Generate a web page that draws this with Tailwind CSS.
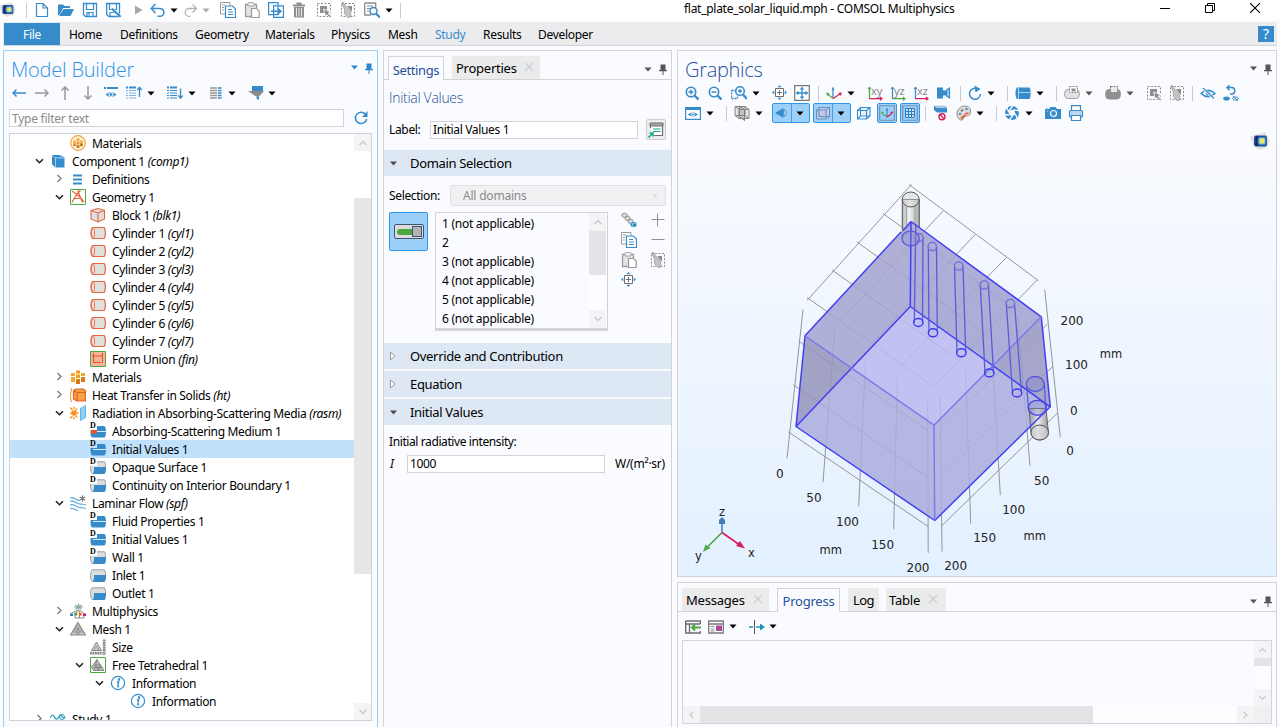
<!DOCTYPE html>
<html lang="en">
<head>
<meta charset="utf-8">
<title>flat_plate_solar_liquid.mph - COMSOL Multiphysics</title>
<script src="https://cdn.jsdelivr.net/npm/@tailwindcss/browser@4"></script>
</head>
<body class="w-[1280px] h-[727px] overflow-hidden bg-[#fafbff] font-['Noto_Sans','Open_Sans',sans-serif] text-[12px] leading-[18px] tracking-[-0.34px] text-black flex flex-col">

<!-- icon library -->
<svg class="hidden" xmlns="http://www.w3.org/2000/svg">
  <symbol id="logo" viewBox="0 0 20 18"><path d="M0 4.500 15 0l5 9-3 7-8 2-6-5z" fill="#e3e3e6"/><rect x="4" y="3.500" width="13" height="11" rx="2" fill="#2a4f96"/><rect x="5.500" y="4.500" width="4" height="9" fill="#14206b"/><rect x="7.500" y="5" width="8.500" height="8" rx="2" fill="#2e8fd6"/><rect x="9" y="6" width="6" height="6" rx="1.500" fill="#8fd0a8"/><rect x="9.800" y="6.800" width="4.400" height="4.400" rx="1" fill="#f3e65c"/></symbol>
  <symbol id="dd" viewBox="0 0 8 5"><path d="M.5.500h7L4 4.500z" fill="currentColor"/></symbol>
  <symbol id="pin" viewBox="0 0 8 11"><path d="M1.500.500h5v5.500H8v1.200H0V6h1.500zM3.500 7h1v4h-1z" fill="currentColor"/></symbol>
  <symbol id="new" viewBox="0 0 16 16"><path d="M2.500 1.500h6.500l4.500 4.500v8.500h-11zM9 1.500v4.500h4.500" fill="#fff" stroke="#368bcb" stroke-width="1.200"/></symbol>
  <symbol id="open" viewBox="0 0 16 16"><path d="M0 2.500h5l1.500 1.500H12v2H5L2 12l-2 1.500z" fill="#368bcb"/><path d="M5.500 7H16l-3.500 7H1z" fill="#368bcb"/></symbol>
  <symbol id="save" viewBox="0 0 16 16"><path d="M1.500 1.500h13v13h-11l-2-2z" fill="none" stroke="#368bcb" stroke-width="1.300"/><path d="M4.500 1.500v6h7v-6M5 14.500v-4h6v4M7 11v2.500" fill="none" stroke="#368bcb" stroke-width="1.200"/></symbol>
  <symbol id="saveas" viewBox="0 0 16 16"><path d="M.7 1.500h12.800v13H2.700l-2-2z" fill="none" stroke="#368bcb" stroke-width="1.300"/><path d="M3.500 1.500v6h7v-6M4 14.500v-4h5" fill="none" stroke="#368bcb" stroke-width="1.200"/><path d="m5 5.500 2 .5 8.500 8-1.500 2-8.500-8z" fill="#368bcb" stroke="#fff" stroke-width=".5"/></symbol>
  <symbol id="play" viewBox="0 0 16 16"><path d="M5 3.500 12.500 8 5 12.500z" fill="#a6a6a6"/></symbol>
  <symbol id="undo" viewBox="0 0 16 16"><path d="M1.500 6.500H10a3.800 3.800 0 0 1 0 7.800H7.500M5.500 2l-4.300 4.500 4.300 4.500" fill="none" stroke="currentColor" stroke-width="1.500"/></symbol>
  <symbol id="redo" viewBox="0 0 16 16"><path d="M13 6.500H6a3.800 3.800 0 0 0 0 7.800h1.500M9.500 2.500l4 4-4 4" fill="none" stroke="#b4b4b4" stroke-width="1.300"/></symbol>
  <symbol id="copy" viewBox="0 0 16 16"><path d="M.5.500h9.500v11.500H.5z" fill="#fff" stroke="#9b9b9b"/><path d="M2 3h3M2 5.500h2M2 8h2" stroke="#9b9b9b"/><path d="M5.500 4h7l3 3v8.500h-10z" fill="#fff" stroke="#368bcb" stroke-width="1.200"/><path d="M8 7.500h4M8 10h5M8 12.500h5" stroke="#368bcb"/></symbol>
  <symbol id="paste" viewBox="0 0 16 16"><path d="M1.500 2.500h11v12h-11z" fill="#e4e4e4" stroke="#9b9b9b" stroke-width="1.300"/><rect x="4" y=".7" width="6" height="3.300" rx="1" fill="#fff" stroke="#9b9b9b"/><path d="M7.500 6.500h5l2.700 2.500v6.500H7.500z" fill="#fff" stroke="#9b9b9b" stroke-width="1.200"/></symbol>
  <symbol id="dup" viewBox="0 0 16 16"><path d="M.6.600h9.400v12H.6zM5.600 3.800h9.800v11.600H5.600z" fill="#fff" stroke="#368bcb" stroke-width="1.200"/><path d="M3 9.300h9.500M9.800 6.500l3 2.800-3 2.800" fill="none" stroke="#368bcb" stroke-width="1.600"/></symbol>
  <symbol id="trash" viewBox="0 0 16 16"><path d="M2 2.500h12v2H2zM5.500.500h5v2h-5zM3 5h10v10.500H3z" fill="#8f8f8f"/><path d="M5.500 6v8.500M8 6v8.500M10.500 6v8.500" stroke="#e8e8e8"/></symbol>
  <symbol id="sel" viewBox="0 0 16 16"><path d="M1.500 1.500h13v13h-13z" fill="none" stroke="#8d8d8d" stroke-dasharray="2 1.500"/><path d="M4 4h7v7H4z" fill="#8d8d8d"/><path d="m7.500 7 7.500 3-2.800 1.200 3 3.300-1.200 1.200-3.300-3-1 2.800z" fill="#8d8d8d" stroke="#fff" stroke-width=".8"/></symbol>
  <symbol id="clr" viewBox="0 0 16 16"><path d="M1.500 1.500h13v13h-13z" fill="none" stroke="#8d8d8d" stroke-dasharray="2 1.500"/><path d="M7 4h5v6z" fill="#8d8d8d"/><path d="M2 1l1-1 4 6c2.500.500 4 4 4 8l-1 1.500C7 16 3.500 12 4.500 7.500z" fill="#c4c4c4" stroke="#8f8f8f" stroke-width=".7"/></symbol>
  <symbol id="find" viewBox="0 0 16 16"><path d="M.7 1h11v5M.7 1v12h6.500" fill="none" stroke="#8d8d8d" stroke-width="1.300"/><path d="M3 4h6M3 6.500h3M3 9h2" stroke="#8d8d8d"/><circle cx="9.500" cy="9" r="3.500" fill="#fff" stroke="#368bcb" stroke-width="1.500"/><path d="m12 11.500 4 4" stroke="#368bcb" stroke-width="2.200"/></symbol>
  <!-- model builder toolbar -->
  <symbol id="arr" viewBox="0 0 14 14"><path d="M.8 7H14M4.500 3.500 1 7l3.500 3.500" fill="none" stroke="currentColor" stroke-width="1.500"/></symbol>
  <symbol id="eye" viewBox="0 0 14 14"><path d="M0 2h2m1 0h11" stroke="#368bcb" stroke-width="2"/><path d="M1.500 8.500Q7 3.500 12.500 8.500 7 13.500 1.500 8.500z" fill="#368bcb"/><circle cx="7" cy="8.500" r="2.600" fill="#cfe6f7"/><circle cx="7" cy="8.500" r="1.300" fill="#368bcb"/></symbol>
  <symbol id="lup" viewBox="0 0 16 14"><path d="M0 1.500h2m1 0h7" stroke="#368bcb" stroke-width="2"/><path d="M0 4.500h2m1 0h7M0 7h2m1 0h7M0 9.500h2m1 0h7M0 12h2m1 0h7" stroke="#7db7e0"/><path d="M13.500 11V2M11.300 4l2.200-2.700L15.700 4" fill="none" stroke="#368bcb" stroke-width="1.300"/></symbol>
  <symbol id="ldn" viewBox="0 0 16 14"><path d="M0 1.500h2m1 0h7" stroke="#368bcb" stroke-width="2"/><path d="M0 4.500h2m1 0h7M0 7h2m1 0h7M0 9.500h2m1 0h7M0 12h2m1 0h7" stroke="#368bcb"/><path d="M13.500 2.500V12M11.300 9.500l2.200 2.700 2.200-2.700" fill="none" stroke="#368bcb" stroke-width="1.300"/></symbol>
  <symbol id="lco" viewBox="0 0 12 14"><path d="M0 2h7M0 4.500h7M0 7h7M0 9.500h7M0 12h7" stroke="#999" stroke-width="1.500"/><path d="M8 2h3.500M8 4.500h3.500M8 7h3.500M8 9.500h3.500M8 12h3.500" stroke="#368bcb" stroke-width="1.700"/></symbol>
  <symbol id="fun" viewBox="0 0 16 14"><path d="M4 0h11v5H4z" fill="#368bcb"/><path d="M0 5h16l-5 5.500H8z" fill="#8b8b8b"/><path d="M8.500 10.500h2.500V14l-2.500-1.500z" fill="#368bcb"/></symbol>
  <symbol id="refresh" viewBox="0 0 16 16"><path d="M12.500 4.200A5.700 5.700 0 1 0 13.700 9" fill="none" stroke="#368bcb" stroke-width="1.500"/><path d="M14.500 1v6H9z" fill="#368bcb"/></symbol>
  <!-- tree -->
  <symbol id="chd" viewBox="0 0 16 16"><path d="m4 6.200 3.500 3.500L11 6.200" fill="none" stroke="#222" stroke-width="1.600"/></symbol>
  <symbol id="chr" viewBox="0 0 16 16"><path d="M5.500 4 9 7.500 5.500 11" fill="none" stroke="#777" stroke-width="1.300"/></symbol>
  <symbol id="mat" viewBox="0 0 16 16"><path d="M1 4h4v3H1z" fill="#f7a81f"/><path d="M6 1.500h4v3H6zM6 5.500h4v3.500H6z" fill="#f39c1d"/><path d="M11 4h4v3h-4zM1 8h4v5H1z" fill="#f6a623"/><path d="M6 10h4v5H6zM11 8h4v5h-4z" fill="#d97a16"/></symbol>
  <symbol id="matc" viewBox="0 0 16 16"><circle cx="8" cy="8" r="7.300" fill="#fff8ec" stroke="#f2a33a" stroke-width="1.200"/><path d="M3 5.500h3v2.200H3zM6.600 3h2.900v3H6.600zM10 5.500h3v2.200h-3z" fill="#f6ae35"/><path d="M3 8.300h3v3H3zM6.600 6.600h2.900v2.600H6.600z" fill="#e9932b"/><path d="M6.600 9.800h2.900v3.200H6.600zM10 8.300h3v3h-3z" fill="#cf7a1e"/></symbol>
  <symbol id="comp" viewBox="0 0 16 16"><path d="M2 2h8l4.500 2.500v10H5.500L2 11.500z" fill="#368bcb"/><path d="M2 2.500 5.500 5v9.500M5.500 5h9M11 2l-1 3" fill="none" stroke="#b9dcf4" stroke-width=".8"/></symbol>
  <symbol id="defs" viewBox="0 0 16 16"><path d="M3 4.500h9M3 8.500h9M3 12.500h9" stroke="#368bcb" stroke-width="2"/></symbol>
  <symbol id="geom" viewBox="0 0 16 16"><path d="M.5.500h15v15H.500z" fill="#fff" stroke="#4ea842"/><path d="M2 2c3 2 9 6 12 11M2 13.500C4 9 7 5 8.500 3.500l4 10M4 9.500h8M8.500 3.500 8 2h2l-1.500 1.500" fill="none" stroke="#e8663c" stroke-width="1.200"/></symbol>
  <symbol id="block" viewBox="0 0 16 16"><path d="m1 3.500 7-2 6.500 2V12L8 15l-7-3z" fill="#dfe1e1" stroke="#e8663c" stroke-width="1.100"/><path d="M1 3.500 8 6l6.500-2.500M8 6v9" fill="none" stroke="#e8663c" stroke-width="1.100"/></symbol>
  <symbol id="cyl" viewBox="0 0 16 16"><path d="M3 2.500h11c1.800 1.500 1.800 9.500 0 11H3C.2 12 .2 4 3 2.500z" fill="#dfe1e1" stroke="#e8663c" stroke-width="1.200"/><path d="M3 2.500C5 4 5 12 3 13.500 1.200 12 1.200 4 3 2.500z" fill="#f4f4f4" stroke="#e8663c"/></symbol>
  <symbol id="fin" viewBox="0 0 16 16"><path d="M.5.500h15v15H.500z" fill="#f5b49a" stroke="#4ea842"/><path d="M3.500 2v9.500H11M2 5h10.500M12.500 2v10" fill="none" stroke="#e8572b" stroke-width="1.100"/></symbol>
  <symbol id="ht" viewBox="0 0 16 16"><path d="M1.500 1v2l-1 4v5l1 3" stroke="#f0a04a" stroke-width="1.200" fill="none"/><path d="M3.500 3.500 6 2h7.500l2 2v10H7l-3.500-2z" fill="#f4a242" stroke="#e0622b" stroke-width="1.200"/><path d="M3.500 3.500 7 5.500h8M7 5.500V14" fill="none" stroke="#e0622b" stroke-width="1.200"/></symbol>
  <symbol id="rad" viewBox="0 0 16 16"><circle cx="4" cy="8" r="2.800" fill="#f5941f"/><path d="M0 2.500 2.500 5M0 8h1M0 13.500 2.500 11M4 1.500v2.500M4 12v2.500M7 3.500 5.500 5.500M8.500 8H7M7 12.500 5.500 10.500" stroke="#f5941f" stroke-width="1.300"/><path d="m10.500 3.500 5-3v12l-5 3z" fill="#8fd0f3" stroke="#59b5ea"/></symbol>
  <symbol id="dom" viewBox="0 0 16 16"><path d="M2 3h12.500c2 2 2 9.500 0 11.500H2C-.3 13 .3 5 2 3z" fill="#368bcb"/><path d="M3 8.500h13" stroke="#d7eaf8" stroke-width="1"/></symbol>
  <symbol id="bnd" viewBox="0 0 16 16"><path d="M2 2.800h12.500c1.500 2 1.500 9.500 0 11.700H2C0 12 0 5 2 2.800z" fill="#dcdede" stroke="#9a9fa5"/><path d="M4 8h12c0 3-.5 5-1.500 7H2.800C4 13 4 11 4 8z" fill="#368bcb"/></symbol>
  <symbol id="lam" viewBox="0 0 16 16"><path d="M0 3c4-2 6 3 10 2.500M0 6.500c4-2 7 3.500 11.500 2.500l4.500 1M0 10c4-2 7 3.500 11.500 2.500l4.500 1M0 13.500c3-1 5 1.500 8 2" fill="none" stroke="#5ba8dc" stroke-width="1.100"/><path d="M12.500.500v6M9.800 2l5.400 3M15.200 2 9.800 5" stroke="#6d6d6d" stroke-width="1.200"/></symbol>
  <symbol id="multi" viewBox="0 0 16 16"><path d="M8.500.500v7M5.500 2l6 4M11.500 2l-6 4M4 4h9" stroke="#8fa7a3" stroke-width="1.200"/><path d="m7 7-6 3.500M8 7l-2 4M9 7l1 4M10 7l4.500 4M5 12v3h9v-3M9.500 12v3" fill="none" stroke="#888"/><path d="M0 10.500h3v2.500H0z" fill="#3a7fc4"/><path d="M4.200 9.500h3v3h-3z" fill="#4ea842"/><path d="M8.700 9.500h3v3h-3z" fill="#ee6a2c"/><path d="M13 10.500h3v2.500h-3z" fill="#d4147a"/></symbol>
  <symbol id="mesh" viewBox="0 0 16 16"><path d="M8 1.500 15.500 14H.5z" fill="#c9c9c9" stroke="#8a8a8a" stroke-width="1.200"/><path d="M8 2v12M4.200 8h7.600L8 14zM2.500 11h11M6 5l4 6M10 5 6 11" fill="none" stroke="#8a8a8a" stroke-width=".7"/></symbol>
  <symbol id="size" viewBox="0 0 16 16"><path d="M6.500 3 11.500 11.500h-10z" fill="#c9c9c9" stroke="#8a8a8a"/><path d="m6.500 7 2.500 4.500H4z" fill="none" stroke="#8a8a8a" stroke-width=".7"/><path d="M0 14.200h12.500" stroke="#8f8b95" stroke-width="2.800" stroke-dasharray="2 .4"/><path d="M14.200 .500V16" stroke="#8f8b95" stroke-width="2.800" stroke-dasharray="2 .4"/></symbol>
  <symbol id="tet" viewBox="0 0 16 16"><path d="M.5.500h15v15H.500z" fill="#fff" stroke="#4ea842"/><path d="m7 2.500 7 11H3.500L1.500 10z" fill="#bdbdbd" stroke="#8a8a8a"/><path d="M7 2.500 4 13M5.500 8l5 0L8.500 13.500zM4.500 10.500h8" fill="none" stroke="#7a7a7a" stroke-width=".8"/></symbol>
  <symbol id="info" viewBox="0 0 16 16"><circle cx="8" cy="8" r="6.600" fill="#fff" stroke="#368bcb" stroke-width="1.200"/><path d="M6.800 7h1.900l-1 4.500h1.300M8.600 3.800h.9v1.200h-.9z" fill="none" stroke="#368bcb" stroke-width="1.300"/></symbol>
  <symbol id="study" viewBox="0 0 16 16"><path d="M0 7c1.500-3 3-4 4.500-1s3 3 4.500-.500C10 3.500 11 3 12 6l3.500 1" fill="none" stroke="#2a9fb8" stroke-width="1.300"/><circle cx="12" cy="6" r="2.500" fill="none" stroke="#2a9fb8"/></symbol>
  <!-- settings -->
  <symbol id="form" viewBox="0 0 16 16"><path d="M2.500 6V1.500h12v12H6" fill="#fff" stroke="#6f6f6f" stroke-width="1.200"/><path d="M2 1h13v3H2z" fill="#a8a8a8" stroke="#6f6f6f"/><path d="M5 7h7.500M5 9.500h7.500" stroke="#17a78b" stroke-width="1.200"/><path d="M.5 15.500 4 12M1.500 11h3.500v3.500" fill="none" stroke="#17a78b" stroke-width="1.600"/></symbol>
  <symbol id="cubes" viewBox="0 0 16 16"><path d="m1 2 3-1 2 1.200v2.600l-3 .7-2-1.200zM4 5l3-1 2 1.200v2.600l-3 .7-2-1.200zM7 8l3-1 2 1.200v2.600l-3 .7-2-1.200z" fill="#ddd" stroke="#969696"/><path d="m9.500 10.500 4-.5 2 1v3.500l-4 .8-2-1.500z" fill="#368bcb"/><path d="m9.500 10.500 2 1.300v3.500M11.500 11.800l4-.8" fill="none" stroke="#b5d8f1" stroke-width=".7"/></symbol>
  <symbol id="plus" viewBox="0 0 16 16"><path d="M1.500 7.500h13M7.500 1.500v13" stroke="#8f8f8f"/></symbol>
  <symbol id="minus" viewBox="0 0 16 16"><path d="M1.500 7.500h13" stroke="#8f8f8f"/></symbol>
  <symbol id="ctr" viewBox="0 0 16 16"><path d="M3.500 3.500h8v8h-8z" fill="#fff" stroke="#6f6f6f"/><path d="M5 7.500h5M7.500 5v5" stroke="#6f6f6f"/><path d="M7.500 0 5.500 2.300h4zM7.500 15l-2-2.300h4zM0 7.500l2.300-2v4zM15 7.500l-2.300-2v4z" fill="#368bcb"/></symbol>
  <!-- graphics -->
  <symbol id="zin" viewBox="0 0 16 16"><circle cx="7" cy="7" r="4.700" fill="none" stroke="#368bcb" stroke-width="1.600"/><path d="m10.500 10.500 4 4" stroke="#368bcb" stroke-width="2.400"/><path d="M4.500 7h5M7 4.500v5" stroke="#368bcb" stroke-width="1.400"/></symbol>
  <symbol id="zout" viewBox="0 0 16 16"><circle cx="7" cy="7" r="4.700" fill="none" stroke="#368bcb" stroke-width="1.600"/><path d="m10.500 10.500 4 4" stroke="#368bcb" stroke-width="2.400"/><path d="M4.500 7h5" stroke="#368bcb" stroke-width="1.400"/></symbol>
  <symbol id="zbox" viewBox="0 0 16 16"><path d="M.5 5.500h6v8h-6z" fill="none" stroke="#368bcb" stroke-width="1.300" stroke-dasharray="2 1"/><circle cx="9" cy="6" r="4.300" fill="#fff" stroke="#368bcb" stroke-width="1.600"/><path d="M12 9.500l4 4.500" stroke="#368bcb" stroke-width="2.400"/><path d="M7 6h4M9 4v4" stroke="#368bcb" stroke-width="1.400"/></symbol>
  <symbol id="ext" viewBox="0 0 16 16"><path d="M.7.700h14.600v14.600H.7z" fill="#fff" stroke="#777" stroke-width="1.200"/><path d="M8 3v10M3 8h10" stroke="#368bcb" stroke-width="1.300"/><path d="M8 1.500 5.800 4.500h4.400zM8 14.500l-2.200-3h4.400zM1.500 8l3-2.200v4.400zM14.500 8l-3-2.200v4.400z" fill="#368bcb"/></symbol>
  <symbol id="axes" viewBox="0 0 16 16"><path d="M7 13V4" stroke="#368bcb" stroke-width="1.300"/><path d="M7 1.500 5.500 4.700h3z" fill="#368bcb"/><path d="M7 13.500 2 9.500" stroke="#4ea842" stroke-width="1.300"/><path d="m0 7.500 3.700.7L1.200 11z" fill="#4ea842"/><path d="m7 13.500 7-4.500" stroke="#d81b5b" stroke-width="1.300"/><path d="m16 7.500-3.700.3L14.500 11z" fill="#d81b5b"/></symbol>
  <symbol id="pl1" viewBox="0 0 16 16"><path d="M2.500 2v12" stroke="#4ea842" stroke-width="1.300"/><path d="M1 4l1.500-2L4 4" fill="none" stroke="#4ea842"/><path d="M2.500 13.700H15M13 12l2 1.700-2 1.700" fill="none" stroke="#d81b5b" stroke-width="1.200"/></symbol>
  <symbol id="pl2" viewBox="0 0 16 16"><path d="M2.500 2v12" stroke="#368bcb" stroke-width="1.300"/><path d="M1 4l1.500-2L4 4" fill="none" stroke="#368bcb"/><path d="M2.500 13.700H15M13 12l2 1.700-2 1.700" fill="none" stroke="#4ea842" stroke-width="1.200"/></symbol>
  <symbol id="pl3" viewBox="0 0 16 16"><path d="M2.500 2v12" stroke="#368bcb" stroke-width="1.300"/><path d="M1 4l1.500-2L4 4" fill="none" stroke="#368bcb"/><path d="M2.500 13.700H15M13 12l2 1.700-2 1.700" fill="none" stroke="#d81b5b" stroke-width="1.200"/></symbol>
  <symbol id="cam2" viewBox="0 0 16 16"><path d="M1 2.500h6v11H1zM7 5.500h3v5H7z" fill="#368bcb"/><path d="m10.500 5 3-2v10l-3-2z" fill="#9ccbed" stroke="#368bcb" stroke-width="1.200"/></symbol>
  <symbol id="rot" viewBox="0 0 16 16"><path d="M9.500 3.500A5.500 5.500 0 1 0 13.500 9" fill="none" stroke="#368bcb" stroke-width="1.500"/><path d="M7.500.500 13.500 4l-5 3.500z" fill="#368bcb"/></symbol>
  <symbol id="gcyl" viewBox="0 0 16 16"><path d="M2 2.500h12.500c1.500 2 1.500 9.500 0 11.500H2C0 12 0 4.500 2 2.500z" fill="#368bcb"/><path d="M3.500 3v11M4 7.500h12" stroke="#a9d2f0"/></symbol>
  <symbol id="hide1" viewBox="0 0 16 16"><rect x=".7" y="4.500" width="14.600" height="9" rx="3.500" fill="#e2e2e2" stroke="#a0a0a0"/><path d="M5.500 1.500h8v6h-8z" fill="#fff" stroke="#8c8c8c" stroke-dasharray="2 1"/><path d="M7.500 3.500h4v3h-4z" fill="#8c8c8c"/></symbol>
  <symbol id="hide2" viewBox="0 0 16 16"><rect x=".7" y="4.500" width="14.600" height="9.500" rx="3.500" fill="#909090" stroke="#909090"/><path d="M5.500 1.500h7v6h-7z" fill="#ececec" stroke="#777" stroke-dasharray="2 1"/></symbol>
  <symbol id="noeye" viewBox="0 0 16 16"><path d="M1 8.500Q8 2 15 8.500 8 15 1 8.500z" fill="none" stroke="#368bcb" stroke-width="1.500"/><circle cx="8" cy="8.500" r="2.200" fill="#368bcb"/><path d="m2.500 3 12 11" stroke="#fff" stroke-width="2.600"/><path d="m3 3 11 10.500" stroke="#368bcb" stroke-width="1.300"/></symbol>
  <symbol id="undoeye" viewBox="0 0 16 16"><path d="M4 2.500h4.500a3.200 3.200 0 0 1 0 6.500H7M6.500.300 4 2.500l2.500 2.700" fill="none" stroke="#368bcb" stroke-width="1.500"/><ellipse cx="3.500" cy="13.500" rx="3.300" ry="2" fill="#368bcb"/><ellipse cx="12.500" cy="13.500" rx="2.800" ry="1.600" fill="none" stroke="#368bcb"/><path d="m10 11 5 5" stroke="#368bcb"/></symbol>
  <symbol id="win" viewBox="0 0 16 14"><path d="M.6 1.500h14.800v11.800H.6z" fill="#fff" stroke="#368bcb" stroke-width="1.200"/><path d="M0 1h16v3H0z" fill="#368bcb"/><path d="M3 8.500Q8 4.500 13 8.500 8 12.500 3 8.500z" fill="#368bcb"/><circle cx="8" cy="8.500" r="1.800" fill="#fff"/><circle cx="8" cy="8.500" r=".9" fill="#368bcb"/></symbol>
  <symbol id="clip" viewBox="0 0 16 16"><path d="M1 1.500h10l4 3v9H5l-4-3z" fill="#e4e4e4"/><path d="m5.500 1 5 3.500v11l-5-4z" fill="#c4c4c4" stroke="#777"/><path d="M1 1.500h10v9H1zM5 4.500h10v9H5zM1 1.500l4 3M11 1.500l4 3M1 10.500l4 3M11 10.500l4 3" fill="none" stroke="#858585"/></symbol>
  <symbol id="cone" viewBox="0 0 16 16"><path d="M1 8 9.500 3v10z" fill="#368bcb"/><path d="M10 4.500c3 1 3 6 0 7z" fill="#ecf4fb" stroke="#368bcb"/></symbol>
  <symbol id="box" viewBox="0 0 16 16"><path d="M4.500 2.500h9.500v8H4.500z" fill="#d5e8f7" fill-opacity=".5"/><path d="M1.500 5.500h9v8.500h-9zM1.500 5.500 4.500 2.500H14v8.500L10.500 14M10.500 5.500 14 2.500M4.500 2.500V11H14M4.500 11l-3 3" fill="none" stroke="#368bcb" stroke-width="1.100"/></symbol>
  <symbol id="boxs" viewBox="0 0 16 16"><path d="M4 2.500h10.500v9L11 14H1.500V5z" fill="#c4c8e4"/><path d="M1.500 5h9.500v9H1.500zM1.500 5 4 2.500h10.500v9L11 14M11 5l3.500-2.500M4 2.500v9h10.500" fill="none" stroke="#5f93c6"/></symbol>
  <symbol id="axb" viewBox="0 0 16 16"><path d="M.7.700h14.600v14.600H.7z" fill="none" stroke="#6f8fae" stroke-width="1.100"/><path d="M8 12V5" stroke="#368bcb" stroke-width="1.200"/><path d="M8 2.500 6.500 5.500h3z" fill="#368bcb"/><path d="M8 12 4 9" stroke="#4ea842" stroke-width="1.300"/><path d="m2 6.500 3 .5-2 2.500z" fill="#4ea842"/><path d="m8 12 4-3" stroke="#d81b5b" stroke-width="1.300"/><path d="m14 6.500-3 .5 2 2.500z" fill="#d81b5b"/></symbol>
  <symbol id="grid" viewBox="0 0 16 16"><path d="M.7.700h14.600v14.600H.7z" fill="none" stroke="#6f8fae" stroke-width="1.100"/><path d="M3.500 3.500h9v9h-9zM6.500 3.500v9M9.500 3.500v9M3.500 6.500h9M3.500 9.500h9" fill="#c8e3f7" stroke="#2f7fc0"/></symbol>
  <symbol id="noleg" viewBox="0 0 16 16"><path d="M1 1h10l3 2v4.500H4L1 5z" fill="#368bcb"/><path d="M1 1h10l3 2H4z" fill="#bcdcf3" stroke="#7f9fb8" stroke-width=".5"/><circle cx="9" cy="11.700" r="3" fill="#fff" stroke="#d81b5b" stroke-width="1.400"/><path d="m7 9.700 4 4" stroke="#d81b5b" stroke-width="1.300"/></symbol>
  <symbol id="pal" viewBox="0 0 16 16"><path d="M9 1C4 1 1 5 1 9s3 6.500 5 6 1-2.500 3-3.500 5 0 5.500-4S12.500 1 9 1z" fill="#dcdcdc" stroke="#8a8a8a"/><circle cx="6" cy="5.500" r="1.200" fill="#777"/><circle cx="10.500" cy="4" r="1.200" fill="#368bcb"/><circle cx="4" cy="9" r="1.200" fill="#4a8fc5"/><path d="m5 13.500 4-3.500M9 9l3.500-1" stroke="#e8572b" stroke-width="1.800"/></symbol>
  <symbol id="aper" viewBox="0 0 16 16"><circle cx="8" cy="8" r="5" fill="none" stroke="#368bcb" stroke-width="4"/><path d="M5 6 9 .5M9 5l6 .5M11 8.500l2.500 5M8.500 11 5 15.500M5 10l-4.500-.5M5 7.500 2.500 2" stroke="#fafbff" stroke-width="1.300"/></symbol>
  <symbol id="cam" viewBox="0 0 16 16"><path d="M0 4h4l1.500-2h5L12 4h4v10H0z" fill="#368bcb"/><circle cx="8.500" cy="8.500" r="3" fill="#368bcb" stroke="#fff" stroke-width="1.200"/><path d="M1 3h2M1.500 6h2" stroke="#9ccbed"/></symbol>
  <symbol id="prn" viewBox="0 0 16 16"><path d="M3.500.600h9v5h-9z" fill="#fff" stroke="#368bcb" stroke-width="1.200"/><rect x="1.500" y="5.500" width="13" height="6.500" rx="1" fill="#bfd8ee" stroke="#368bcb" stroke-width="1.200"/><path d="M3.500 10.500h9v5h-9z" fill="#fff" stroke="#368bcb" stroke-width="1.200"/></symbol>
  <symbol id="tb1" viewBox="0 0 16 14"><path d="M.7 1h14.600v3M.7 1v12h14.600v-2M.7 4h14.600M4.500 4v9" fill="none" stroke="#6f6f6f" stroke-width="1.400"/><path d="M16 7.500H7M10 4.500 7 7.500l3 3" fill="none" stroke="#4ea842" stroke-width="2"/></symbol>
  <symbol id="tb2" viewBox="0 0 16 14"><path d="M.7 1h14.600v12H.7zM.7 4h14.600" fill="#fff" stroke="#7a7a7a" stroke-width="1.300"/><path d="M2.500 6.500h4M2.500 9h4M2.500 11h4" stroke="#8a8a8a"/><path d="M8 5.500h6V11H8z" fill="#b0479d"/></symbol>
  <symbol id="tb3" viewBox="0 0 16 14"><path d="M5.500 0v14" stroke="#555"/><path d="M0 7h4M7 7h5" stroke="#1f93b8" stroke-width="1.400"/><path d="m11 3.500 5 3.500-5 3.500z" fill="#1f93b8"/></symbol>
  <symbol id="x" viewBox="0 0 10 10"><path d="m1 1 8 8M9 1 1 9" stroke="currentColor" stroke-width="1.200" fill="none"/></symbol>
  <symbol id="cu" viewBox="0 0 10 6"><path d="M1.500 5 5 1.500 8.500 5" fill="none" stroke="#c8c8cc" stroke-width="1.300"/></symbol>
</svg>

<!-- title bar -->
<header class="h-[19px] bg-white flex items-center shrink-0">
  <div id="quick" class="flex items-center h-4 w-[680px] mt-px"></div>
  <div class="grow pl-1 leading-4 -mt-[2px] tracking-[-0.28px] whitespace-nowrap">flat_plate_solar_liquid.mph - COMSOL Multiphysics</div>
  <div class="flex items-center gap-[35px] pr-[20px] -mt-1">
    <svg class="w-[10px] h-[10px]" viewBox="0 0 10 10"><path d="M0 5.500h10" stroke="#000"/></svg>
    <svg class="w-[10px] h-[10px]" viewBox="0 0 10 10"><path d="M.5 2.500h7v7h-7zM2.500 2.500v-2h7v7h-2" fill="none" stroke="#000"/></svg>
    <svg class="w-[10px] h-[10px]" viewBox="0 0 10 10"><path d="m0 0 10 10M10 0 0 10" stroke="#000" stroke-width="1.100"/></svg>
  </div>
</header>

<!-- ribbon tabs -->
<nav class="mt-[3px] ml-[3px] mr-[3px] h-[24px] bg-[#ececee] border-b border-[#d3d4d8] flex items-center shrink-0 tracking-[-0.3px] whitespace-nowrap">
  <div class="w-14 h-[22px] mt-px ml-px bg-[#368bcb] text-white flex items-center justify-center pt-px">File</div>
  <div class="flex pt-0.5">
    <div class="ml-[9px] w-[51px]">Home</div><div class="w-[75px]">Definitions</div><div class="w-[70px]">Geometry</div><div class="w-[66px]">Materials</div><div class="w-[57px]">Physics</div><div class="w-[47px]">Mesh</div><div class="w-12 text-[#368bcb]">Study</div><div class="w-[55px]">Results</div><div>Developer</div>
  </div>
  <div class="ml-auto mr-[3px] size-4 bg-[#368bcb] text-white text-[14px] leading-4 text-center">?</div>
</nav>

<main class="mt-1 pl-[3px] flex grow min-h-0">
  <!-- model builder -->
  <section class="w-[375px] h-[680px] border border-[#9dcff5] px-[5px] shrink-0">
    <div class="flex items-center h-[33px] pt-1">
      <h1 class="ml-0.5 grow font-['Open_Sans','Noto_Sans',sans-serif] text-[20px] leading-7 tracking-[-0.2px] text-[#2f93e6] font-light">Model Builder</h1>
      <svg class="w-[9px] h-[5px] text-[#2f86cc] mr-[6px] -mt-1"><use href="#dd"/></svg>
      <svg class="w-2 h-[11px] text-[#2f86cc] -mr-px -mt-0.5"><use href="#pin"/></svg>
    </div>
    <div id="mb" class="flex items-center h-4 mt-px pl-[3px]"></div>
    <div class="flex items-center mt-2">
      <div class="w-[335px] h-[18px] border border-[#d3d4d8] bg-white text-[#8a8a8a] pl-0.5 leading-[18px] tracking-[-0.25px]">Type filter text</div>
      <svg class="size-4 ml-[9px]"><use href="#refresh"/></svg>
    </div>
    <div class="mt-[6px] w-[363px] h-[588px] border border-[#cfd0d4] bg-white flex overflow-hidden">
      <div id="tree" class="w-[344px] h-[586px] overflow-hidden shrink-0"></div>
      <div class="w-[17px] flex flex-col">
        <div class="h-[17px] bg-[#f4f4f5] flex items-center justify-center"><svg class="w-[10px] h-[6px]"><use href="#cu"/></svg></div>
        <div class="h-[47px] bg-white"></div>
        <div class="h-[376px] bg-[#e6e6e7]"></div>
        <div class="grow bg-white"></div>
        <div class="h-[17px] bg-[#f4f4f5] flex items-center justify-center"><svg class="w-[10px] h-[6px] rotate-180"><use href="#cu"/></svg></div>
      </div>
    </div>
  </section>

  <!-- settings -->
  <section class="ml-[5px] w-[289px] h-[680px] border border-[#d3d4d8] shrink-0">
    <div class="h-[29px] pt-[5px] flex border-b border-[#d3d4d8] text-[13px]">
      <div class="ml-1 w-14 h-6 border border-b-0 border-[#d3d4d8] bg-[#fafbff] text-[#27509b] text-center leading-[26px] tracking-[-0.4px]">Settings</div>
      <div class="ml-2 w-[88px] h-[23px] bg-[#ebebeb] pl-1 leading-[25px] pt-px flex items-center tracking-[-0.25px]">Properties<svg class="size-[10px] ml-[7px] -mt-[3px] text-[#c6d0de]"><use href="#x"/></svg></div>
      <svg class="w-2 h-[5px] text-[#555] ml-auto mt-[11px]"><use href="#dd"/></svg>
      <svg class="w-2 h-[11px] text-[#555] ml-[7px] mr-[4px] mt-2"><use href="#pin"/></svg>
    </div>
    <h2 class="mt-2 ml-[5px] font-['Open_Sans','Noto_Sans',sans-serif] text-[14px] leading-5 tracking-[-0.3px] font-light text-[#27509b]">Initial Values</h2>
    <div class="mt-[11px] h-[21px] flex items-center pl-[5px] pr-[5px]">
      <span class="w-[41px]">Label:</span>
      <div class="w-[208px] h-[18px] border border-[#d3d4d8] bg-white pl-0.5 leading-4">Initial Values 1</div>
      <div class="ml-2 w-5 h-[21px] rounded-xs border border-[#cfcfcf] bg-[#ededed] flex items-center justify-center"><svg class="size-4"><use href="#form"/></svg></div>
    </div>
    <div class="mt-[10px] h-[26px] bg-[#dee8f4] flex items-center text-[13px] tracking-[-0.33px]"><svg class="w-[9px] h-[5px] ml-[5px] mr-[12px] text-[#4a4a4a]"><use href="#dd"/></svg>Domain Selection</div>
    <div class="mt-[9px] h-[21px] flex items-center pl-[5px]">
      <span class="w-[61px]">Selection:</span>
      <div class="w-[216px] h-[21px] rounded-xs border border-[#e0e0e3] bg-[#f1f1f3] text-[#8a8a8a] pl-3 pr-[6px] flex items-center justify-between tracking-[-0.2px]">All domains<svg class="w-2 h-1 text-[#dadada]"><use href="#dd"/></svg></div>
    </div>
    <div class="mt-[6px] pl-[5px] flex items-start">
      <div class="w-[39px] h-[39px] rounded-xs border border-[#2f96ea] bg-[#9dd0f8] flex items-center justify-center">
        <div class="w-[30px] h-[15px] border border-[#3f5575] bg-[#dcdcdc] rounded-xs flex items-center p-px pl-0.5"><div class="w-[15px] h-[6px] rounded-l-full bg-[#4ea842]"></div><div class="w-[10px] h-[11px] border border-[#3f5575] bg-[#b2b2b2]"></div></div>
      </div>
      <div class="ml-[7px] w-[173px] h-[119px] border border-b-3 border-[#d3d3d6] flex overflow-hidden pr-px">
        <div class="grow pl-[6px] pt-px leading-[19px] tracking-[-0.27px] whitespace-nowrap"><p>1 (not applicable)</p><p>2</p><p>3 (not applicable)</p><p>4 (not applicable)</p><p>5 (not applicable)</p><p>6 (not applicable)</p></div>
        <div class="w-[17px] flex flex-col">
          <div class="h-[18px] bg-[#f4f4f6] flex items-center justify-center"><svg class="w-[10px] h-[6px]"><use href="#cu"/></svg></div>
          <div class="h-[44px] bg-[#e3e4e6]"></div><div class="grow bg-[#fdfdff]"></div>
          <div class="h-[18px] bg-[#f4f4f6] flex items-center justify-center"><svg class="w-[10px] h-[6px] rotate-180"><use href="#cu"/></svg></div>
        </div>
      </div>
      <div class="ml-[13px] grid grid-cols-[16px_16px] gap-x-[13px] gap-y-1">
        <svg class="size-4"><use href="#cubes"/></svg><svg class="size-4"><use href="#plus"/></svg>
        <svg class="size-4"><use href="#copy"/></svg><svg class="size-4"><use href="#minus"/></svg>
        <svg class="size-4"><use href="#paste"/></svg><svg class="size-4"><use href="#clr"/></svg>
        <svg class="size-4"><use href="#ctr"/></svg>
      </div>
    </div>
    <div class="mt-3 flex flex-col gap-0.5 text-[13px] tracking-[-0.33px]">
      <div class="h-[26px] bg-[#dee8f4] flex items-center"><svg class="w-[6px] h-[10px] ml-[6px] mr-[14px]" viewBox="0 0 6 10"><path d="M.5 1v8l4.500-4z" fill="#fff" stroke="#9a9a9a"/></svg>Override and Contribution</div>
      <div class="h-[26px] bg-[#dee8f4] flex items-center"><svg class="w-[6px] h-[10px] ml-[6px] mr-[14px]" viewBox="0 0 6 10"><path d="M.5 1v8l4.500-4z" fill="#fff" stroke="#9a9a9a"/></svg>Equation</div>
      <div class="h-[26px] bg-[#dee8f4] flex items-center"><svg class="w-[9px] h-[5px] ml-[5px] mr-[12px] text-[#4a4a4a]"><use href="#dd"/></svg>Initial Values</div>
    </div>
    <div class="mt-2 pl-[5px] tracking-[-0.4px]">Initial radiative intensity:</div>
    <div class="mt-1 pl-[6px] h-[18px] flex items-center">
      <i class="w-[17px]">I</i>
      <div class="w-[198px] h-[18px] border border-[#d3d4d8] bg-white pl-[2px] leading-4">1000</div>
      <span class="ml-[10px] whitespace-nowrap tracking-[-0.25px]">W/(m²·sr)</span>
    </div>
  </section>

  <!-- right column -->
  <div class="ml-[5px] w-[600px] shrink-0">
    <section class="h-[527px] border border-[#d3d4d8] bg-linear-to-b from-[#fafbff] from-15% to-[#e3f0ff]">
      <div class="flex items-center h-[34px] pt-1">
        <h1 class="ml-[7px] grow font-['Open_Sans','Noto_Sans',sans-serif] text-[20px] leading-7 tracking-[-0.3px] text-[#27509b] font-light">Graphics</h1>
        <svg class="w-[9px] h-[5px] text-[#555] mr-[6px] -mt-1"><use href="#dd"/></svg>
        <svg class="w-2 h-[11px] text-[#555] mr-1 -mt-0.5"><use href="#pin"/></svg>
      </div>
      <div id="g1" class="flex items-center h-4 pl-[6px]"></div>
      <div id="g2" class="flex items-center h-5 mt-0.5 pl-[7px]"></div>
      <svg class="block w-[598px] h-[453px]" viewBox="678 122.500 598 453">
        <defs>
          <linearGradient id="tube"><stop offset="0" stop-color="#8f8f8f"/><stop offset=".45" stop-color="#ededed"/><stop offset="1" stop-color="#7f7f7f"/></linearGradient>
        </defs>
        <use href="#logo" x="1250" y="131.500" width="20" height="18"/>
        <!-- grid planes -->
        <g stroke="#8a8a8a" stroke-width=".9" fill="none">
          <path d="M911.500 184 807 300M909 184l129.500 96.200M1037.300 279.300 933.300 386M807 297l126.300 89M943.300 210.300 840.700 320M975.300 234 872 342.300M1006.300 257 902.700 364M883 213 1010.700 306M857 241.500 983.300 332M832 269.500 959 360"/>
          <path d="M803 309 787 457.700M834.700 331 823 481.700M865.700 356.700 858.700 505.700M897.300 375 893.700 528.700M927.700 396.700 928.200 552.300M798.700 340.700l129 89.300M793.300 384.300l134.400 92.400M788.300 431.300l139.400 94.400"/>
          <path d="M940 396l2 155M965.700 370l5 153M991.700 345l8.600 149.700M1017.700 316.700l12.300 149M1044.700 289l15.600 147.700M1047.700 323.300l-107 106M1052.700 366l-111.400 109.700M1057.300 412.700 942 525"/>
        </g>
        <!-- inlet tube -->
        <path d="M902.300 199v31l-1 8.500 10-17 8 6V199z" fill="url(#tube)" fill-opacity=".65" stroke="#555" stroke-width="1"/>
        <ellipse cx="910.700" cy="199" rx="8.500" ry="7.500" fill="#d4d4d4" fill-opacity=".5" stroke="#555"/>
        <path d="M906.500 206v19M915 205v18" stroke="#888" stroke-width=".7"/>
        <!-- solid faces -->
        <g fill-opacity=".86">
          <path d="M911 221 805 335.300 851.600 367.600 910.300 306z" fill="#a4a4d0"/>
          <path d="M805 335.300 796 426 851.600 367.600z" fill="#9594bc"/>
          <path d="M911 221 1041.300 316.300 992.900 365.200 910.300 306z" fill="#a2a2d2"/>
          <path d="M1041.300 316.300 1050.300 406.300 992.900 365.200z" fill="#9a99c4"/>
          <path d="M910.300 306 851.600 367.600 934 424.700 992.900 365.200z" fill="#b9b9f0"/>
          <path d="M851.600 367.600 796 426 934.700 520 934 424.700z" fill="#abacdd"/>
          <path d="M992.900 365.200 1050.300 406.300 934.700 520 934 424.700z" fill="#acacde"/>
        </g>
        <!-- lower outlet tube -->
        <path d="M1029 408 1031 432a8.700 7.500 0 0 0 17.400 0L1046 408z" fill="url(#tube)" fill-opacity=".75" stroke="#666"/>
        <ellipse cx="1039.700" cy="432" rx="8.800" ry="7.500" fill="#d5d5d5" fill-opacity=".6" stroke="#555"/>
        <!-- edges -->
        <g fill="none" stroke="#4040f2" stroke-width="1.500" stroke-linejoin="round">
          <path d="M911 221 1041.300 316.300 1050.300 406.300 934.700 520 796 426 805 335.300 901 231.500M911 221 910.300 306 796 426M910.300 306 1050.300 406.300M911 221l-8 9"/>
          <path d="M805 335.300 934 424.700 1041.300 316.300M934 424.700l.7 95.300" stroke="#7b7bec"/>
        </g>
        <!-- pipes -->
        <g fill="none" stroke="#5a5ada" stroke-width="1.300">
          <path d="M915.800 224 914.300 322M923 237 922.500 322M928.300 246 929 332M936.500 246l.8 86M954.500 266l2.500 86M963 266l2.700 86M980.300 285l4.700 87M988.500 285l5 87M1006.300 303l6.200 89M1014.500 303l7 89"/>
          <g stroke="#7070d4"><circle cx="919" cy="237" r="4"/><circle cx="932.300" cy="246" r="4.200"/><circle cx="958.700" cy="265.500" r="4.200"/><circle cx="984.300" cy="284.500" r="4.200"/><circle cx="1010.300" cy="303" r="4.200"/></g>
          <g stroke="#3a3aee" stroke-width="1.400"><ellipse cx="918.300" cy="322" rx="4.700" ry="4"/><ellipse cx="933" cy="332.300" rx="4.700" ry="4"/><ellipse cx="961.300" cy="352.300" rx="4.700" ry="4"/><ellipse cx="989.300" cy="372.500" rx="4.700" ry="4"/><ellipse cx="1017" cy="392.500" rx="4.700" ry="4"/></g>
          <ellipse cx="910.700" cy="238" rx="8.700" ry="7.300" fill="#8888cc" fill-opacity=".3"/>
          <path d="M1026.500 384l2 24M1044.300 384l1.500 24"/>
          <ellipse cx="1035.300" cy="383.500" rx="9" ry="7.500" fill="#7f7fc8" fill-opacity=".35"/>
          <ellipse cx="1037.300" cy="407.300" rx="9" ry="7.500" fill="#8888cc" fill-opacity=".3" stroke="#4545e6"/>
        </g>
        <!-- axis labels -->
        <g font-family="DejaVu Sans, sans-serif" font-size="12" letter-spacing="0" text-anchor="middle" fill="#222">
          <text x="1072" y="324.700">200</text><text x="1076.500" y="368">100</text><text x="1073.700" y="414.500">0</text>
          <text x="1070" y="454.500">0</text><text x="1041.700" y="484">50</text><text x="1013.700" y="513">100</text><text x="984.700" y="541.500">150</text><text x="955.700" y="569.500">200</text>
          <text x="918" y="571">200</text><text x="882.700" y="548.500">150</text><text x="847.500" y="525">100</text><text x="814" y="501">50</text><text x="779.700" y="477">0</text>
          <g font-size="11.500"><text x="1111" y="357.500">mm</text><text x="1034.700" y="539">mm</text><text x="830.700" y="553">mm</text><text x="722" y="515.500">z</text><text x="698.500" y="559">y</text><text x="751.500" y="556">x</text></g>
        </g>
        <!-- orientation triad -->
        <path d="M722 532v-12" stroke="#4682c0" stroke-width="1.600"/><path d="m722 516.500 3 3v4h-6v-4z" fill="#3f7fc0"/>
        <path d="M722 532 708 546" stroke="#4ea842" stroke-width="1.600"/><path d="m703 551.500 2.500-7.500 5 3.500z" fill="#4ea842"/>
        <path d="m722 532 17 12" stroke="#d81b5b" stroke-width="1.600"/><path d="m745 548-9-2.500 4-5z" fill="#d81b5b"/>
      </svg>
    </section>

    <section class="mt-[5px] h-[160px] border border-[#d3d4d8]">
      <div class="h-[29px] pt-[5px] flex border-b border-[#d3d4d8] text-[13px] tracking-[-0.22px]">
        <div class="ml-[4px] w-[87px] h-[23px] bg-[#ebebeb] pl-1 flex items-center">Messages<svg class="size-[10px] ml-2 -mt-0.5 text-[#c6d0de]"><use href="#x"/></svg></div>
        <div class="ml-2 w-[63px] h-6 border border-b-0 border-[#d3d4d8] bg-[#fafbff] text-[#27509b] text-center leading-[25px]">Progress</div>
        <div class="ml-2 w-[31px] h-[23px] bg-[#ebebeb] text-center leading-6 tracking-[-0.5px]">Log</div>
        <div class="ml-[7px] w-[60px] h-[23px] bg-[#ebebeb] pl-[3px] flex items-center">Table<svg class="size-[10px] ml-2 -mt-0.5 text-[#c6d0de]"><use href="#x"/></svg></div>
        <svg class="w-[9px] h-[5px] text-[#555] ml-auto mt-[11px]"><use href="#dd"/></svg>
        <svg class="w-2 h-[11px] text-[#555] ml-[6px] mr-1 mt-2"><use href="#pin"/></svg>
      </div>
      <div class="flex items-center h-[28px] pt-px pl-[7px]">
        <svg class="w-4 h-[14px]"><use href="#tb1"/></svg><svg class="w-4 h-[14px] ml-[7px]"><use href="#tb2"/></svg><svg class="w-2 h-[5px] ml-[5px]"><use href="#dd"/></svg>
        <svg class="w-4 h-[14px] ml-[12px]"><use href="#tb3"/></svg><svg class="w-2 h-[5px] ml-[4px]"><use href="#dd"/></svg>
      </div>
      <div class="ml-[4px] w-[590px] h-[84px] border border-[#d3d4d8] flex flex-col">
        <div class="h-[65px] flex justify-end">
          <div class="w-[17px] flex flex-col">
            <div class="h-[17px] bg-[#f4f4f6] flex items-center justify-center"><svg class="w-[9px] h-[6px]"><use href="#cu"/></svg></div>
            <div class="h-2 bg-[#e3e4e6]"></div><div class="grow bg-[#fdfdff]"></div>
            <div class="h-[17px] bg-[#f4f4f6] flex items-center justify-center"><svg class="w-[9px] h-[6px] rotate-180"><use href="#cu"/></svg></div>
          </div>
        </div>
        <div class="h-[17px] flex">
          <div class="w-[17px] bg-[#f4f4f6] flex items-center justify-center"><svg class="w-[9px] h-[6px] -rotate-90"><use href="#cu"/></svg></div>
          <div class="w-[393px] bg-[#e3e4e6]"></div><div class="grow bg-[#fdfdff]"></div>
          <div class="w-[17px] bg-[#f4f4f6] flex items-center justify-center"><svg class="w-[9px] h-[6px] rotate-90"><use href="#cu"/></svg></div>
          <div class="w-[17px] bg-[#f0f0f1]"></div>
        </div>
      </div>
    </section>
  </div>
</main>

<script>
const use = (id, cls) => `<svg class="shrink-0 ${cls}"><use href="#${id}"/></svg>`;
const ic = (id, ml) => use(id, 'size-4 ' + ml);
const dd = (ml, color = 'text-black') => use('dd', 'w-2 h-[5px] ' + color + ' ' + ml);
const sep = ml => `<div class="w-px h-[15px] bg-[#c9cacf] shrink-0 ${ml}"></div>`;
const put = (id, items) => document.getElementById(id).innerHTML = items.join('');

put('quick', [
  use('logo', 'w-[17px] h-[15px] -ml-px mr-0.5 -mt-0.5'), sep('ml-2'), ic('new', 'ml-[7px]'), ic('open', 'ml-2'), ic('save', 'ml-2'), ic('saveas', 'ml-2'),
  ic('play', 'ml-2'), ic('undo', 'ml-1 text-[#368bcb]'), dd('ml-1'), ic('redo', 'ml-[5px]'), dd('ml-[3px]', 'text-[#aaa]'),
  ic('copy', 'ml-[10px]'), ic('paste', 'ml-2'), ic('dup', 'ml-2'), ic('trash', 'ml-[7px]'), ic('sel', 'ml-[9px]'), ic('clr', 'ml-2'), ic('find', 'ml-2'), dd('ml-[5px]'), sep('ml-[7px]')
]);

put('mb', [
  use('arr', 'size-[14px] text-[#368bcb]'), use('arr', 'size-[14px] text-[#999] rotate-180 ml-[9px]'), use('arr', 'size-[14px] text-[#999] rotate-90 ml-[9px]'), use('arr', 'size-[14px] text-[#999] -rotate-90 ml-[9px]'),
  use('eye', 'size-[14px] ml-[9px]'), use('lup', 'w-4 h-[14px] ml-2'), dd('ml-[5px]'), use('ldn', 'w-4 h-[14px] ml-[12px]'), dd('ml-[5px]'),
  use('lco', 'w-3 h-[14px] ml-[14px]'), dd('ml-[6px]'), use('fun', 'w-4 h-[14px] ml-[12px]'), dd('ml-1')
]);

const plane = (id, txt, ml) => `<div class="relative size-4 shrink-0 ${ml}">${use(id, 'size-4 block')}<span class="absolute left-[4px] top-0 text-[11px] leading-[12px] tracking-normal text-[#8a8a8a]">${txt}</span></div>`;
put('g1', [
  ic('zin', ''), ic('zout', 'ml-[7px]'), ic('zbox', 'ml-2'), dd('ml-[5px]'), ic('ctr', 'ml-3'), ic('ext', 'ml-[6px]'), sep('ml-2'),
  ic('axes', 'ml-[7px]'), dd('ml-[5px]'), plane('pl1', 'xy', 'ml-3'), plane('pl2', 'yz', 'ml-[7px]'), plane('pl3', 'xz', 'ml-[7px]'), ic('cam2', 'ml-[7px]'), sep('ml-2'),
  ic('rot', 'ml-[6px]'), dd('ml-1'), sep('ml-3'), ic('gcyl', 'ml-[7px]'), dd('ml-[5px]'), sep('ml-3'),
  ic('hide1', 'ml-[7px]'), dd('ml-[5px]', 'text-[#555]'), ic('hide2', 'ml-3'), dd('ml-[5px]', 'text-[#555]'), ic('sel', 'ml-3'), ic('clr', 'ml-[7px]'), sep('ml-[7px]'),
  ic('noeye', 'ml-[7px]'), ic('undoeye', 'ml-[7px]')
]);

const tog = (id, ml) => `<div class="h-5 w-[38px] border border-[#2f96ea] bg-[#9dd0f8] rounded-xs flex items-center shrink-0 ${ml}">${ic(id, 'ml-px')}<div class="ml-px w-px h-[18px] bg-[#4a9fe0]"></div>${dd('ml-1')}</div>`;
const tog1 = (id, ml) => `<div class="size-5 border border-[#2f96ea] bg-[#9dd0f8] rounded-xs flex items-center justify-center shrink-0 ${ml}">${ic(id, '')}</div>`;
put('g2', [
  use('win', 'w-4 h-[14px]'), dd('ml-[5px]'), sep('ml-3'), ic('clip', 'ml-[7px]'), dd('ml-[5px]'), tog('cone', 'ml-[9px]'), tog('boxs', 'ml-[3px]'),
  ic('box', 'ml-[5px]'), tog1('axb', 'ml-[5px]'), tog1('grid', 'ml-[3px]'), sep('ml-[5px]'), ic('noleg', 'ml-[7px]'), ic('pal', 'ml-[7px]'), dd('ml-[4px]'), sep('ml-3'),
  ic('aper', 'ml-[7px]'), dd('ml-[5px]'), ic('cam', 'ml-3'), ic('prn', 'ml-[7px]')
]);

const indent = ['pl-[22px]', 'pl-[42px]', 'pl-[62px]', 'pl-[82px]', 'pl-[102px]'];
const nodes = [
  [1, '', 'matc', 'Materials'], [0, 'd', 'comp', 'Component 1', 'comp1'], [1, 'r', 'defs', 'Definitions'], [1, 'd', 'geom', 'Geometry 1'],
  [2, '', 'block', 'Block 1', 'blk1'],
  ...[1, 2, 3, 4, 5, 6, 7].map(n => [2, '', 'cyl', 'Cylinder ' + n, 'cyl' + n]),
  [2, '', 'fin', 'Form Union', 'fin'], [1, 'r', 'mat', 'Materials'], [1, 'r', 'ht', 'Heat Transfer in Solids', 'ht'],
  [1, 'd', 'rad', 'Radiation in Absorbing-Scattering Media', 'rasm'],
  [2, '', 'dom', 'Absorbing-Scattering Medium 1', '', 'D', 'red'], [2, '', 'dom', 'Initial Values 1', '', 'D', 'sel'], [2, '', 'bnd', 'Opaque Surface 1', '', 'D'], [2, '', 'bnd', 'Continuity on Interior Boundary 1', '', 'D'],
  [1, 'd', 'lam', 'Laminar Flow', 'spf'],
  [2, '', 'dom', 'Fluid Properties 1', '', 'D'], [2, '', 'dom', 'Initial Values 1', '', 'D'], [2, '', 'bnd', 'Wall 1', '', 'D'], [2, '', 'bnd', 'Inlet 1'], [2, '', 'bnd', 'Outlet 1'],
  [1, 'r', 'multi', 'Multiphysics'], [1, 'd', 'mesh', 'Mesh 1'], [2, '', 'size', 'Size'], [2, 'd', 'tet', 'Free Tetrahedral 1'],
  [3, 'd', 'info', 'Information'], [4, '', 'info', 'Information'], [0, 'r', 'study', 'Study 1']
];
put('tree', nodes.map(([lv, ch, icon, text, tag, badge, flag]) => `
  <div class="h-[18px] flex items-center whitespace-nowrap ${indent[lv]} ${flag === 'sel' ? 'bg-[#c0e1fc]' : ''}">
    <div class="size-4 shrink-0">${ch ? use(ch === 'd' ? 'chd' : 'chr', 'size-4 block') : ''}</div>
    <div class="relative size-4 shrink-0 ml-0.5">${use(icon, 'size-4 block')}
      ${flag === 'red' ? '<div class="absolute left-[1px] top-[7px] w-[6px] h-[4px] rounded-b-full bg-[#e8572b]"></div>' : ''}
      ${badge ? `<span class="absolute left-0 -top-px w-[7px] h-2 ${flag === 'sel' ? 'bg-[#c0e1fc]' : 'bg-white'} text-[8px] leading-[8px] font-bold tracking-normal font-['Liberation_Serif',serif]">D</span>` : ''}
    </div>
    <span class="ml-[6px] pt-px">${text}${tag ? ` <i>(${tag})</i>` : ''}</span>
  </div>`));
</script>
</body>
</html>
